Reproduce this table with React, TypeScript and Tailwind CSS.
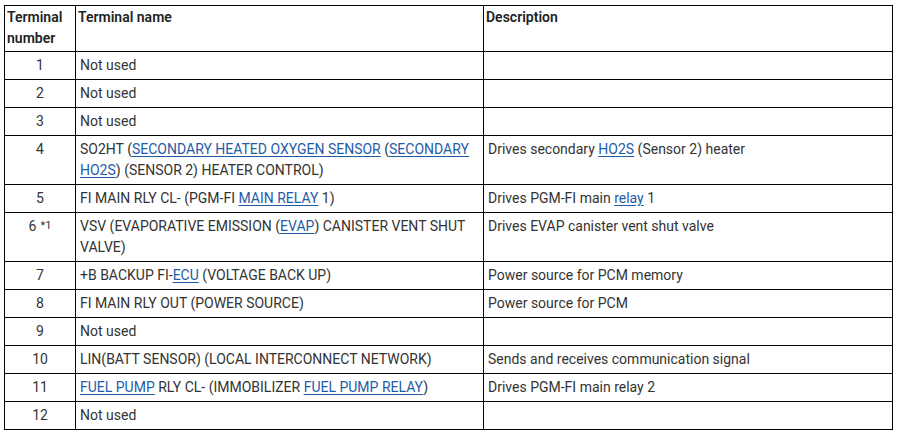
type Part = string | { link: string };

type Row = {
  num: string;
  sup?: string;
  name: Part[];
  desc: Part[];
};

const rows: Row[] = [
  { num: '1', name: ['Not used'], desc: [] },
  { num: '2', name: ['Not used'], desc: [] },
  { num: '3', name: ['Not used'], desc: [] },
  {
    num: '4',
    name: [
      'SO2HT (',
      { link: 'SECONDARY HEATED OXYGEN SENSOR' },
      ' (',
      { link: 'SECONDARY HO2S' },
      ') (SENSOR 2) HEATER CONTROL)',
    ],
    desc: ['Drives secondary ', { link: 'HO2S' }, ' (Sensor 2) heater'],
  },
  {
    num: '5',
    name: ['FI MAIN RLY CL- (PGM-FI ', { link: 'MAIN RELAY' }, ' 1)'],
    desc: ['Drives PGM-FI main ', { link: 'relay' }, ' 1'],
  },
  {
    num: '6',
    sup: '*1',
    name: ['VSV (EVAPORATIVE EMISSION (', { link: 'EVAP' }, ') CANISTER VENT SHUT VALVE)'],
    desc: ['Drives EVAP canister vent shut valve'],
  },
  {
    num: '7',
    name: ['+B BACKUP FI-', { link: 'ECU' }, ' (VOLTAGE BACK UP)'],
    desc: ['Power source for PCM memory'],
  },
  { num: '8', name: ['FI MAIN RLY OUT (POWER SOURCE)'], desc: ['Power source for PCM'] },
  { num: '9', name: ['Not used'], desc: [] },
  {
    num: '10',
    name: ['LIN(BATT SENSOR) (LOCAL INTERCONNECT NETWORK)'],
    desc: ['Sends and receives communication signal'],
  },
  {
    num: '11',
    name: [{ link: 'FUEL PUMP' }, ' RLY CL- (IMMOBILIZER ', { link: 'FUEL PUMP RELAY' }, ')'],
    desc: ['Drives PGM-FI main relay 2'],
  },
  { num: '12', name: ['Not used'], desc: [] },
];

function Text({ parts }: { parts: Part[] }) {
  return (
    <>
      {parts.map((p, i) =>
        typeof p === 'string' ? (
          <span key={i}>{p}</span>
        ) : (
          <a key={i} href="#" className="text-[#1f5ca8] underline underline-offset-2">
            {p.link}
          </a>
        )
      )}
    </>
  );
}

export default function App() {
  return (
    <div
      className="w-[901px] h-[436px] overflow-hidden bg-white pt-[5px] pl-[4px] text-[14px] text-[#333333]"
      style={{ fontFamily: 'Roboto, "Liberation Sans", sans-serif' }}
    >
      <table className="table-fixed border-collapse w-[888px]">
        <colgroup>
          <col className="w-[71px]" />
          <col className="w-[408px]" />
          <col className="w-[409px]" />
        </colgroup>
        <thead>
          <tr className="align-top text-[#222222] leading-[21px]">
            <th className="border border-black text-left font-semibold px-[2px] pt-[1px] pb-[2px]">
              Terminal number
            </th>
            <th className="border border-black text-left font-semibold px-[2px] pt-[1px] pb-[2px]">
              Terminal name
            </th>
            <th className="border border-black text-left font-semibold px-[2px] pt-[1px] pb-[2px]">
              Description
            </th>
          </tr>
        </thead>
        <tbody>
          {rows.map((r) => (
            <tr key={r.num} className="align-top leading-[21px]">
              <td className="border border-black text-center py-[3px]">
                {r.num}
                {r.sup && (
                  <sup className="text-[11px] ml-[4px] relative top-[-2px] leading-none">{r.sup}</sup>
                )}
              </td>
              <td className="border border-black px-[4px] py-[3px]">
                <Text parts={r.name} />
              </td>
              <td className="border border-black px-[4px] py-[3px]">
                <Text parts={r.desc} />
              </td>
            </tr>
          ))}
        </tbody>
      </table>
      <p className="mt-[4px] ml-[74px] leading-[21px] text-[#333333]">*1: Not used on some models</p>
    </div>
  );
}
